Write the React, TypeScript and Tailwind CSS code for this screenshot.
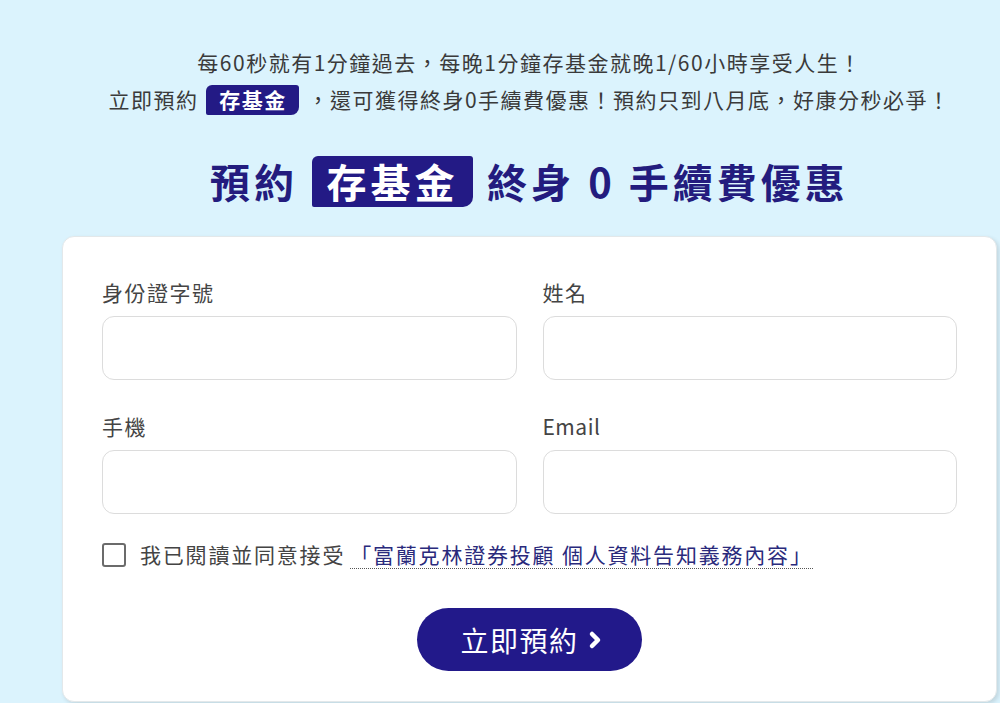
import { ChevronRight } from "lucide-react";

const font = { fontFamily: '"Noto Sans CJK TC", "Noto Sans", sans-serif' };

function Field({ label, latin }: { label: string; latin?: boolean }) {
  return (
    <div className="flex flex-col">
      <label
        className={`h-[28px] leading-[28px] text-[21px] text-[#444] ${latin ? "tracking-[0.5px]" : "tracking-[1.5px]"}`}
      >
        {label}
      </label>
      <input
        type="text"
        className="mt-[10px] h-[64px] w-full rounded-[12px] border border-[#dcdcdc] bg-white px-4 text-[18px] outline-none"
      />
    </div>
  );
}

export default function App() {
  return (
    <div style={font} className="min-h-[703px] w-full bg-[#dbf3fd] pt-[43px]">
      <div className="ml-[62px] mr-[3px]">
        <p className="h-[38px] text-center text-[21px] leading-[38px] tracking-[1.5px] text-[#3a3a3a]">
          每60秒就有1分鐘過去，每晚1分鐘存基金就晚1/60小時享受人生！
        </p>
        <p className="flex h-[38px] items-center justify-center text-[21px] tracking-[1.5px] text-[#3a3a3a]">
          <span>立即預約</span>
          <span className="mx-2 flex h-[30px] w-[93px] items-center justify-center rounded-tl-[6px] rounded-tr-[3px] rounded-br-[8px] rounded-bl-[2px] bg-[#231a85] font-bold text-white">
            存基金
          </span>
          <span>，還可獲得終身0手續費優惠！預約只到八月底，好康分秒必爭！</span>
        </p>

        <h1 className="mt-[34px] flex h-[56px] items-center justify-center text-[40px] font-bold tracking-[4px] text-[#231c7e]">
          <span>預約</span>
          <span className="mx-[14px] flex h-[51px] w-[161px] items-center justify-center rounded-tl-[6px] rounded-tr-[3px] rounded-br-[10px] rounded-bl-[2px] bg-[#231a85] text-white">
            存基金
          </span>
          <span>終身 0 手續費優惠</span>
        </h1>
      </div>

      <div className="ml-[62px] mr-[3px] mt-[27px] rounded-[12px] border border-[#e3e8ea] bg-white px-[39px] pb-[30px] pt-[41px] shadow-[2px_2px_4px_rgba(0,0,0,0.12)]">
        <div className="grid grid-cols-2 gap-x-[26px] gap-y-[32px]">
          <Field label="身份證字號" />
          <Field label="姓名" />
          <Field label="手機" />
          <Field label="Email" latin />
        </div>

        <div className="mt-[27px] flex h-[28px] items-center">
          <input
            type="checkbox"
            className="h-[24px] w-[24px] appearance-none rounded-[3px] border-2 border-[#6b6b6b] bg-white"
          />
          <span className="ml-[14px] text-[21px] tracking-[1.8px] text-[#444]">我已閱讀並同意接受</span>
          <a className="ml-[5px] border-b border-dotted border-[#555] text-[21px] leading-[27px] tracking-[1.8px] text-[#2a2a7c]">
            「富蘭克林證券投顧 個人資料告知義務內容」
          </a>
        </div>

        <div className="mt-[39px] flex justify-center">
          <button className="flex h-[63px] w-[225px] items-center justify-center rounded-full bg-[#22198a] pl-[8px] text-[28px] tracking-[1.5px] text-white">
            <span>立即預約</span>
            <ChevronRight size={24} strokeWidth={4.5} className="ml-[4px]" />
          </button>
        </div>
      </div>
    </div>
  );
}
